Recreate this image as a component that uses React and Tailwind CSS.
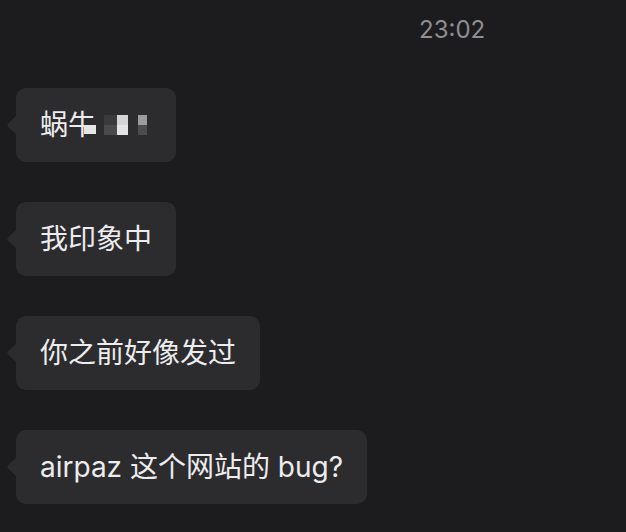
import React from 'react';

const messages = [
  { id: 1, mosaic: true },
  { id: 2, text: '我印象中' },
  { id: 3, text: '你之前好像发过' },
  { id: 4, text: 'airpaz 这个网站的 bug?' },
];

// little pointer on the left side of an incoming bubble
const Tail = () => (
  <svg className="absolute left-[-10px] top-[27px]" width="11" height="20" viewBox="0 0 11 20">
    <path d="M11 0 L11 20 L2 11.5 Q0.5 10 2 8.5 Z" fill="#2c2c2e" />
  </svg>
);

// blurred name: two glyphs then a pixelated strip
const MosaicName = () => (
  <div className="flex items-center">
    <span>蜗牛</span>
    <div className="relative flex h-[20px] items-stretch gap-[10px] pl-[8px] pr-[5px]">
      <div className="absolute left-[-12px] top-[10px] h-[9px] w-[12px] bg-[#e6e6e6]" />
      <div className="flex">
        <div className="flex w-[13px] flex-col">
          <div className="h-[10px] bg-[#3a3a3c]" />
          <div className="h-[10px] bg-[#4a4a4c]" />
        </div>
        <div className="flex w-[11px] flex-col">
          <div className="h-[10px] bg-[#d4d4d6]" />
          <div className="h-[10px] bg-[#e4e4e6]" />
        </div>
      </div>
      <div className="flex w-[9px] flex-col">
        <div className="h-[10px] bg-[#9c9c9e]" />
        <div className="h-[10px] bg-[#4c4c4e]" />
      </div>
    </div>
  </div>
);

export default function App() {
  return (
    <div
      className="w-[626px] h-[532px] bg-[#1c1c1e] overflow-hidden"
      style={{ fontFamily: 'Inter, "Noto Sans CJK SC", sans-serif' }}
    >
      <div className="pt-[16px] pl-[419px] text-[24px] leading-[28px] text-[#8e8e93]">23:02</div>
      <div className="flex flex-col items-start gap-[40px] pt-[44px] pl-[16px]">
        {messages.map((m) => (
          <div
            key={m.id}
            className="relative flex h-[74px] items-center rounded-[10px] bg-[#2c2c2e] px-[24px] text-[28px] text-[#ececee]"
          >
            <Tail />
            {m.mosaic ? <MosaicName /> : <span>{m.text}</span>}
          </div>
        ))}
      </div>
    </div>
  );
}
